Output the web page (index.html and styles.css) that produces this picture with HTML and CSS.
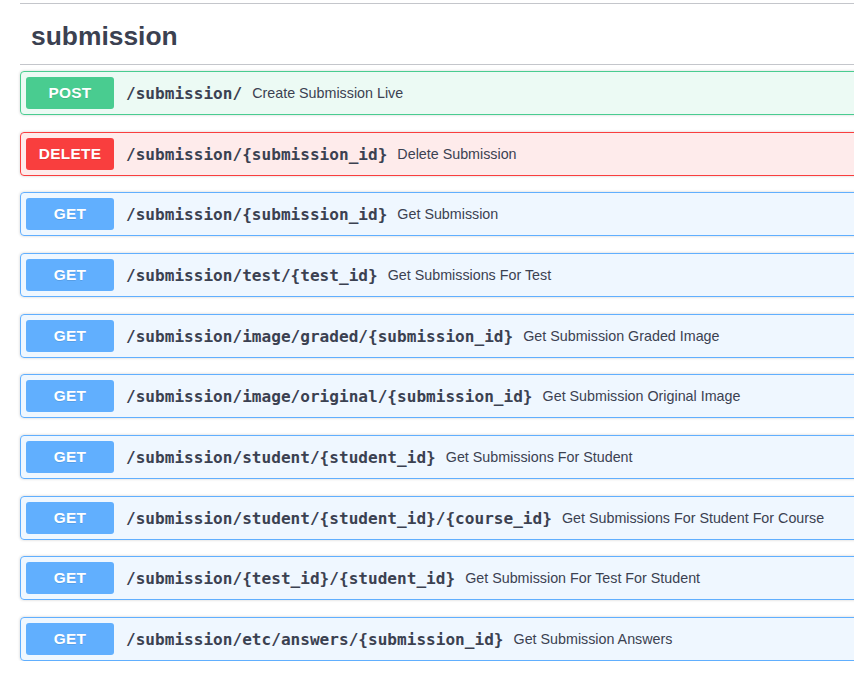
FILE: index.html
```html
<!DOCTYPE html>
<html lang="en">
<head>
<meta charset="utf-8">
<title>submission</title>
<link rel="stylesheet" href="styles.css">
</head>
<body>
<div class="page">
  <section class="tag-section">
    <h3 class="tag-title">submission</h3>
    <div class="ops">
      <div class="opblock post">
        <span class="method">POST</span>
        <span class="path">/submission/</span>
        <span class="desc">Create Submission Live</span>
      </div>
      <div class="opblock delete">
        <span class="method">DELETE</span>
        <span class="path">/submission/{submission_id}</span>
        <span class="desc">Delete Submission</span>
      </div>
      <div class="opblock get">
        <span class="method">GET</span>
        <span class="path">/submission/{submission_id}</span>
        <span class="desc">Get Submission</span>
      </div>
      <div class="opblock get">
        <span class="method">GET</span>
        <span class="path">/submission/test/{test_id}</span>
        <span class="desc">Get Submissions For Test</span>
      </div>
      <div class="opblock get">
        <span class="method">GET</span>
        <span class="path">/submission/image/graded/{submission_id}</span>
        <span class="desc">Get Submission Graded Image</span>
      </div>
      <div class="opblock get">
        <span class="method">GET</span>
        <span class="path">/submission/image/original/{submission_id}</span>
        <span class="desc">Get Submission Original Image</span>
      </div>
      <div class="opblock get">
        <span class="method">GET</span>
        <span class="path">/submission/student/{student_id}</span>
        <span class="desc">Get Submissions For Student</span>
      </div>
      <div class="opblock get">
        <span class="method">GET</span>
        <span class="path">/submission/student/{student_id}/{course_id}</span>
        <span class="desc">Get Submissions For Student For Course</span>
      </div>
      <div class="opblock get">
        <span class="method">GET</span>
        <span class="path">/submission/{test_id}/{student_id}</span>
        <span class="desc">Get Submission For Test For Student</span>
      </div>
      <div class="opblock get">
        <span class="method">GET</span>
        <span class="path">/submission/etc/answers/{submission_id}</span>
        <span class="desc">Get Submission Answers</span>
      </div>
    </div>
  </section>
</div>
</body>
</html>
```

FILE: styles.css
```css
html, body {
  margin: 0;
  padding: 0;
  background: #ffffff;
  overflow: hidden;
}

body {
  font-family: "Liberation Sans", Arial, sans-serif;
  color: #3b4151;
}

.page {
  width: 1100px;
  padding: 3px 0 0 20px;
}

.tag-section {
  border-top: 1px solid #c4c6cb;
}

.tag-title {
  margin: 0 0 6px 0;
  padding: 17px 20px 13px 11px;
  font-size: 26.4px;
  line-height: 30px;
  font-weight: 700;
  color: #3b4151;
  border-bottom: 1px solid #c4c6cb;
}

.ops {
  display: flex;
  flex-direction: column;
  gap: 16.67px;
}

.opblock {
  display: flex;
  align-items: center;
  padding: 5px;
  border: 1px solid #000;
  border-radius: 4px;
  box-shadow: 0 0 3px rgba(0, 0, 0, 0.19);
}

.method {
  flex: none;
  width: 88px;
  height: 32px;
  display: flex;
  align-items: center;
  justify-content: center;
  border-radius: 3px;
  color: #ffffff;
  font-size: 15.4px;
  font-weight: 700;
  letter-spacing: 0.3px;
  text-shadow: 0 1px 0 rgba(0, 0, 0, 0.1);
}

.path {
  padding: 1px 10px 0 12px;
  font-family: "DejaVu Sans Mono", monospace;
  font-size: 16.08px;
  font-weight: 700;
  color: #3b4151;
}

.desc {
  font-size: 14.3px;
  color: #3b4151;
}

.post {
  background: rgba(73, 204, 144, 0.1);
  border-color: #49cc90;
}
.post .method { background: #49cc90; }

.delete {
  background: rgba(249, 62, 62, 0.1);
  border-color: #f93e3e;
}
.delete .method { background: #f93e3e; }

.get {
  background: rgba(97, 175, 254, 0.1);
  border-color: #61affe;
}
.get .method { background: #61affe; }
```
